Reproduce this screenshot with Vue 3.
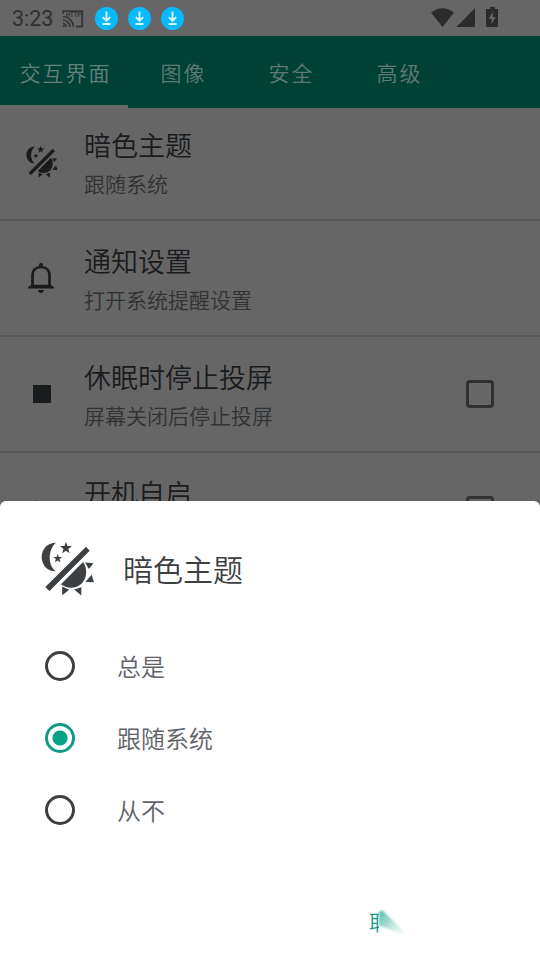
<script setup>
const tabs = ['交互界面', '图像', '安全', '高级']
const rows = [
  { icon: 'theme', title: '暗色主题', sub: '跟随系统' },
  { icon: 'bell', title: '通知设置', sub: '打开系统提醒设置' },
  { icon: 'stop', title: '休眠时停止投屏', sub: '屏幕关闭后停止投屏', check: true },
  { icon: 'boot', title: '开机自启', sub: '', check: true },
]
const options = ['总是', '跟随系统', '从不']
const selected = 1
</script>

<template>
  <div class="screen">
    <svg class="defs" width="0" height="0">
      <symbol id="theme-icon" viewBox="0 0 54 54">
        <path d="M15 .7C6 .7.700 7.500.700 15S6 29.600 14.700 29.300C6.500 23 7 7 15 .7Z" />
        <path d="M24.900-.2l1.500 4.200 4.500.1-3.600 2.800 1.300 4.300-3.700-2.500-3.700 2.500 1.300-4.300L18.900 4.100l4.500-.1ZM16.700 11.900l1.100 3.100 3.300.1-2.600 2 .9 3.200-2.700-1.800-2.700 1.800.9-3.200-2.600-2 3.300-.1Z" />
        <path d="M45 4.800l3.700 3.900L8.500 49l-4.200-4Z" />
        <path d="M42 20L20 42.200c6 5 15.500 4.500 20.700-.8 5.500-5.500 6-15 1.300-21.400Z" />
        <path d="M44 20.500l8.500.7-4.600 5.800ZM50.700 32.800l2.200 7.500-8.500-.3ZM40.300 45.300v8.200l-7.100-6ZM21.200 44.600l7 3.200-7 5.500Z" />
      </symbol>
    </svg>

    <header class="status">
      <span class="time">3:23</span>
      <svg class="cast" viewBox="0 0 22 18">
        <path d="M1.200 4V1.200h19v15.300H14" fill="none" stroke="#373737" stroke-width="1.800" />
        <path d="M1 13.500a4 4 0 0 1 3.500 3.500M1 10a7.500 7.500 0 0 1 7 7M1 6.500A11 11 0 0 1 11.500 17" fill="none" stroke="#373737" stroke-width="1.700" />
        <path d="M1 15h1a2 2 0 0 1 1 2H1Z" fill="#373737" />
        <text x="4" y="7.300" textLength="15" lengthAdjust="spacingAndGlyphs">HTTP</text>
      </svg>
      <svg v-for="n in 3" :key="n" class="download" viewBox="0 0 24 24">
        <circle cx="11.500" cy="11.500" r="11.500" fill="#08b9fb" />
        <path d="M11.500 4.500v9M7.800 10.200l3.700 3.700 3.700-3.700M7.500 17h8" fill="none" stroke="#dff7ff" stroke-width="1.900" />
      </svg>
      <span class="spacer"></span>
      <svg class="signals" viewBox="0 0 68 22">
        <path d="M0 5.500Q11.500-3 23 5.500L11.500 20ZM44 1v19H25.500Z" />
        <path d="M59 0h5v2h3v18H55V2h4Z" />
        <path d="M61.800 4.500L57.800 11.800h2.700v5.700l4.200-7.600h-2.900Z" fill="#666" />
      </svg>
    </header>

    <nav class="tabs">
      <div v-for="(tab, i) in tabs" :key="tab" class="tab" :class="{ active: i === 0 }">{{ tab }}</div>
    </nav>

    <main class="list">
      <section v-for="row in rows" :key="row.title" class="row">
        <div class="icon">
          <svg v-if="row.icon === 'theme'" class="small-theme"><use href="#theme-icon" /></svg>
          <svg v-else-if="row.icon === 'bell'" class="bell" viewBox="0 0 26 30">
            <path d="M4.500 25V13C4.500 7 8 4 13 4s8.500 3 8.500 9v12" fill="none" stroke="#1a1b1d" stroke-width="2.700" />
            <path d="M0 25.500v-1.200l3.200-2.500h19.600l3.200 2.500v1.200ZM10 27h6q-.5 3-3 3t-3-3ZM11 4V2q0-2 2-2t2 2v2Z" />
          </svg>
          <span v-else-if="row.icon === 'stop'" class="stop"></span>
          <svg v-else class="boot" viewBox="0 0 24 24"><path d="M6 2l8 10-8 10Z" /></svg>
        </div>
        <div class="copy">
          <div class="title">{{ row.title }}</div>
          <div class="sub">{{ row.sub }}</div>
        </div>
        <span v-if="row.check" class="check"></span>
      </section>
    </main>

    <div class="sheet">
      <div class="heading">
        <svg class="large-theme"><use href="#theme-icon" /></svg>
        <h1>暗色主题</h1>
      </div>
      <div v-for="(option, i) in options" :key="option" class="option">
        <span class="radio" :class="{ chosen: i === selected }"></span>
        <span class="label">{{ option }}</span>
      </div>
      <div class="actions">
        <span class="cancel">取</span>
        <span class="glow"><span class="ray"></span></span>
      </div>
    </div>
  </div>
</template>

<style>
body { margin: 0; overflow: hidden; }
</style>

<style scoped>
.screen {
  position: relative;
  display: flex;
  flex-direction: column;
  width: 540px;
  height: 960px;
  overflow: hidden;
  background: #666;
  color: #1a1b1d;
  fill: #1a1b1d;
  font-family: Roboto, "Noto Sans CJK SC", sans-serif;
  font-weight: 350;
}
.defs { position: absolute; }
.status {
  display: flex;
  align-items: center;
  flex: none;
  height: 36px;
  box-sizing: border-box;
  padding: 1px 41px 0 12px;
}
.time { width: 50px; font-size: 21.500px; font-weight: 400; line-height: 34px; color: #303030; padding-top: 1px; box-sizing: border-box; }
.cast { width: 22px; height: 18px; margin-right: 11px; }
.cast text { font: bold 6.500px Roboto, sans-serif; fill: #373737; }
.download { width: 24px; height: 24px; margin-right: 9px; }
.spacer { flex: 1; }
.signals { width: 68px; height: 22px; fill: #2b2b2b; margin-bottom: 1px; }
.tabs { display: flex; flex: none; height: 72px; background: #004136; }
.tab {
  width: 108px;
  height: 72px;
  box-sizing: border-box;
  padding: 4px 0 0 3px;
  text-align: center;
  font-size: 21px;
  letter-spacing: 1.900px;
  line-height: 68px;
  color: #5f7a73;
}
.tab.active { width: 128px; border-bottom: 3px solid #666; color: #64827b; }
.list { display: flex; flex-direction: column; margin-top: -3px; }
.row {
  display: flex;
  flex: none;
  align-items: flex-start;
  height: 116px;
  box-sizing: border-box;
  border-bottom: 2px solid #595959;
}
.icon { display: flex; align-items: center; justify-content: center; width: 84px; height: 114px; }
.small-theme { width: 32px; height: 32px; }
.bell { width: 26px; height: 30px; margin-right: 2px; }
.stop { width: 18px; height: 18px; background: #1a1b1d; }
.boot { width: 24px; height: 24px; }
.copy { flex: 1; padding-top: 23px; }
.title { font-size: 27px; line-height: 38px; white-space: nowrap; }
.sub { margin-top: 3px; font-size: 21px; line-height: 32px; color: #303234; }
.check { width: 22px; height: 22px; margin: 43px 46px 0 0; border: 3px solid #303030; border-radius: 4px; }
.sheet {
  position: absolute;
  left: 0;
  right: 0;
  top: 501px;
  bottom: 0;
  display: flex;
  flex-direction: column;
  background: #fff;
  border-radius: 6px 6px 0 0;
  color: #3c4043;
  fill: #3c4043;
}
.heading { display: flex; align-items: center; height: 129px; padding: 7px 41px 0; gap: 28px; box-sizing: border-box; }
.large-theme { width: 54px; height: 54px; }
h1 { margin: 0; padding-top: 4px; font-size: 30px; font-weight: 350; line-height: 42px; }
.option { display: flex; align-items: center; height: 72px; padding-left: 45px; gap: 42px; font-size: 24px; color: #5f6368; }
.label { padding-bottom: 2px; }
.radio { box-sizing: border-box; width: 30px; height: 30px; border: 3px solid #3c4043; border-radius: 50%; }
.radio.chosen { border-color: #129c83; background: radial-gradient(circle, #07a187 7px, #fff 8px); }
.actions { display: flex; align-items: center; padding: 61px 0 0 369px; }
.cancel { width: 10px; overflow: hidden; white-space: nowrap; font-size: 21px; line-height: 32px; color: #149a82; }
.glow { display: flex; filter: blur(1.200px); }
.ray {
  width: 28px;
  height: 26px;
  background: linear-gradient(125deg, #5fc0ae 5%, #b5e3da 45%, #fff 95%);
  clip-path: polygon(0 8%, 12% 1%, 100% 93%, 70% 86%, 0 60%);
}
</style>
